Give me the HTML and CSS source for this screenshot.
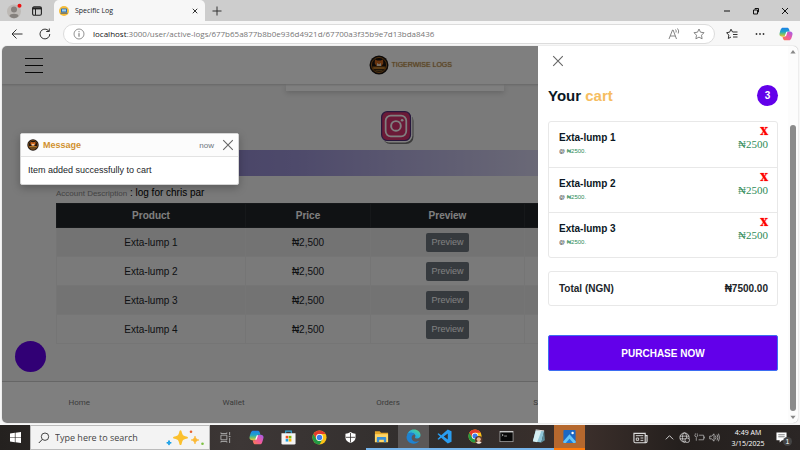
FILE: index.html
```html
<!DOCTYPE html>
<html lang="en">
<head>
<meta charset="utf-8">
<meta name="viewport" content="width=device-width, initial-scale=1">
<title>Specific Log</title>
<link rel="stylesheet" href="styles.css">
</head>
<body>
<svg class="defs" aria-hidden="true">
  <defs>
    <linearGradient id="copA" x1="0" y1="0" x2="0" y2="1"><stop offset="0" stop-color="#1c7fe8"/><stop offset=".45" stop-color="#1fa5c8"/><stop offset=".7" stop-color="#6cc070"/><stop offset="1" stop-color="#f0c63a"/></linearGradient>
    <linearGradient id="copB" x1="1" y1="0" x2="0" y2="1"><stop offset="0" stop-color="#9b5df0"/><stop offset=".5" stop-color="#ef5aa0"/><stop offset="1" stop-color="#fb7d4a"/></linearGradient>
    <linearGradient id="edgeA" x1="0" y1="1" x2="1" y2="0"><stop offset="0" stop-color="#1377d0"/><stop offset=".5" stop-color="#27b3dc"/><stop offset="1" stop-color="#5fdc6c"/></linearGradient>
    <symbol id="copilot" viewBox="0 0 16 16">
      <path d="M11 5h1.500C14.800 5 15.800 6.500 15.400 8.500c-.4 2-.9 3.500-1.500 5-.5 1-1.200 1.700-2.400 1.700H7c-1.500 0-2-.7-2.500-2L4 11h1.500c1 0 1.600-.6 2-1.700L8.800 6C9.200 5.200 10 5 11 5z" fill="url(#copB)"/>
      <path d="M4.500.8H9c1.500 0 2.200.7 2.600 2L12.200 5H10.800C9.500 5 8.800 5.700 8.400 7l-1 2.700C7 10.700 6.500 11 5.500 11H3.500C1.200 11 .2 9.500.6 7.500c.4-2 .9-3.500 1.500-5C2.600 1.500 3.300.8 4.500.8z" fill="url(#copA)"/>
      <path d="M8.300 5.500h1.400L8 10.500H6.500z" fill="#fff"/>
    </symbol>
    <symbol id="chrome" viewBox="0 0 16 16">
      <circle cx="8" cy="8" r="7.500" fill="#fbc116"/>
      <path d="M1.500 4.250A7.500 7.500 0 0 1 14.500 4.250H8A3.750 3.750 0 0 0 4.750 9.900z" fill="#e33b2e"/>
      <path d="M1.500 4.250A7.500 7.500 0 0 0 8 15.500L11.250 9.900A3.750 3.750 0 0 1 4.750 9.900z" fill="#229a45"/>
      <circle cx="8" cy="8" r="3.700" fill="#fff"/><circle cx="8" cy="8" r="2.900" fill="#3b7ded"/>
    </symbol>
    <symbol id="tiger" viewBox="0 0 20 20">
      <circle cx="10" cy="10" r="9.500" fill="#1b1410"/>
      <circle cx="10" cy="10" r="7.600" fill="none" stroke="#a8671f" stroke-width=".9"/>
      <path d="M6 4.500l2.300 1h3.400l2.300-1 .3 4-1.800 2.500h-5L5.700 8.500z" fill="#d0681c"/>
      <path d="M8 8l2 1.200L12 8v3H8z" fill="#f2e3cf"/>
      <path d="M3.500 11.500h13v2.800h-13z" fill="#a5641a"/>
      <path d="M5 13h10M6.500 15.800h7" stroke="#e0a045" stroke-width=".7"/>
    </symbol>
    <symbol id="cross" viewBox="0 0 12 12"><path d="M1.200 1.200l9.600 9.600M10.800 1.200l-9.600 9.600" fill="none" stroke="currentColor" stroke-width="1.100"/></symbol>
  </defs>
</svg>

<header class="tabstrip">
  <span class="avatar"><svg viewBox="0 0 16 16"><circle cx="7" cy="8.500" r="7" fill="#bdb9b5"/><circle cx="7" cy="6.500" r="3" fill="#85817d"/><path d="M2.500 13c0-3 9-3 9 0-2.500 3-6.500 3-9 0z" fill="#85817d"/><circle cx="12.500" cy="2.800" r="2" fill="#ee1010"/></svg></span>
  <button class="icon-btn workspaces" aria-label="Tab actions"><svg viewBox="0 0 10 10"><rect x=".6" y=".9" width="8.800" height="8.400" rx="1.500" fill="none" stroke="#222" stroke-width="1.100"/><path d="M.6 2.400h8.800" stroke="#222" stroke-width="2"/><path d="M3.500 3v6" stroke="#222"/></svg></button>
  <div class="tab">
    <svg class="favicon" viewBox="0 0 10 10"><circle cx="5" cy="5" r="5" fill="#f6bd3b"/><rect x="2" y="2.500" width="6" height="4" rx=".6" fill="#2d6fb5"/><rect x="3" y="3.300" width="4" height="2.200" fill="#9fd0f0"/><path d="M1.500 7.200h7" stroke="#4d6078"/></svg>
    <span class="tab-title">Specific Log</span>
    <button class="icon-btn tab-close" aria-label="Close tab"><svg viewBox="0 0 12 12"><path d="M1.500 1.500l9 9M10.500 1.500l-9 9" stroke="#333" stroke-width="2"/></svg></button>
  </div>
  <button class="icon-btn new-tab" aria-label="New tab"><svg viewBox="0 0 10 10"><path d="M5 .5v9M.5 5h9" stroke="#333"/></svg></button>
  <div class="window-controls">
    <button class="icon-btn" aria-label="Minimize"><svg viewBox="0 0 8 8"><path d="M1 4h6" stroke="#111"/></svg></button>
    <button class="icon-btn" aria-label="Restore"><svg viewBox="0 0 8 8"><path d="M1.500 3h4v4h-4zM3 2.500v-1h3.500V5H6" fill="none" stroke="#111"/></svg></button>
    <button class="icon-btn" aria-label="Close"><svg viewBox="0 0 8 8"><path d="M1 1l6 6M7 1L1 7" stroke="#111"/></svg></button>
  </div>
</header>

<div class="toolbar">
  <button class="icon-btn" aria-label="Back"><svg viewBox="0 0 12 12"><path d="M11.500 6H1M5.500 1.500L1 6l4.500 4.500" fill="none" stroke="#333"/></svg></button>
  <button class="icon-btn" aria-label="Refresh"><svg viewBox="0 0 12 12"><path d="M10.800 6A4.900 4.900 0 1 1 9 2.200l1 1M10.300.5v3H7.200" fill="none" stroke="#333"/></svg></button>
  <div class="address">
    <svg viewBox="0 0 12 12"><circle cx="6" cy="6" r="5" fill="none" stroke="#777" stroke-width=".8"/><path d="M6 5.200v3.500M6 3.200v1" stroke="#666"/></svg>
    <span class="url"><b>localhost</b>:3000/user/active-logs/677b65a877b8b0e936d4921d/67700a3f35b9e7d13bda8436</span>
    <button class="icon-btn" aria-label="Read aloud"><svg viewBox="0 0 12 12"><path d="M1 11l3.500-9h.6L8.500 11M2.200 8h5M7.500 1.500q1.200 1.300.5 3M9.500.5q2 2.200.7 5" fill="none" stroke="#777" stroke-width=".9"/></svg></button>
    <button class="icon-btn" aria-label="Favorite"><svg viewBox="0 0 12 12"><path d="M6 1l1.500 3.200 3.500.5-2.500 2.500.6 3.600L6 9.100l-3.100 1.700.6-3.600L1 4.700l3.500-.5z" fill="none" stroke="#777" stroke-width=".9"/></svg></button>
  </div>
  <button class="icon-btn" aria-label="Favorites list"><svg viewBox="0 0 12 12"><path d="M6.500 4L5 1.200 3.600 4.200l-3 .5 2.200 2.400L2.300 10.500 5 9M6.500 4h5M7 6.500h4.500M7 9h4.500" fill="none" stroke="#333"/></svg></button>
  <button class="icon-btn" aria-label="More"><svg viewBox="0 0 12 12"><g fill="#333"><circle cx="2.500" cy="6" r=".9"/><circle cx="6" cy="6" r=".9"/><circle cx="9.500" cy="6" r=".9"/></g></svg></button>
  <button class="icon-btn copilot" aria-label="Copilot"><svg><use href="#copilot"/></svg></button>
</div>

<div class="viewport">
  <div class="page">
    <div class="site-header">
      <button class="menu" aria-label="Menu"><i></i><i></i><i></i></button>
      <a class="brand" href="#"><svg><use href="#tiger"/></svg><span>TIGERWISE LOGS</span></a>
    </div>
    <main class="content">
      <div class="card-edge"></div>
      <svg class="insta" viewBox="0 0 32 32"><rect x="2" y="2.500" width="29.500" height="29.500" rx="7" fill="#777"/><rect x=".5" y=".5" width="30" height="30" rx="7" fill="#fff"/><rect x=".6" y=".6" width="28" height="28" rx="5.500" fill="#d6336f" stroke="#51307a" stroke-width="1.200"/><rect x="4.500" y="4.500" width="20" height="20" rx="5" fill="none" stroke="#fff" stroke-width="1.700"/><circle cx="14.500" cy="14.500" r="4.700" fill="none" stroke="#fff" stroke-width="1.900"/><circle cx="20.500" cy="9" r="1.300" fill="#fff"/></svg>
      <div class="band"></div>
      <p class="description"><small>Account Description</small> : log for chris par</p>
      <table>
        <colgroup><col class="c-product"><col class="c-price"><col class="c-preview"><col></colgroup>
        <thead><tr><th>Product</th><th>Price</th><th>Preview</th><td></td></tr></thead>
        <tbody>
          <tr><td>Exta-lump 1</td><td>₦2,500</td><td><button class="preview">Preview</button></td><td></td></tr>
          <tr><td>Exta-lump 2</td><td>₦2,500</td><td><button class="preview">Preview</button></td><td></td></tr>
          <tr><td>Exta-lump 3</td><td>₦2,500</td><td><button class="preview">Preview</button></td><td></td></tr>
          <tr><td>Exta-lump 4</td><td>₦2,500</td><td><button class="preview">Preview</button></td><td></td></tr>
        </tbody>
      </table>
    </main>
    <nav class="bottom-nav"><a href="#">Home</a><a href="#">Wallet</a><a href="#">Orders</a><a href="#">Shop</a></nav>
    <button class="fab" aria-label="Open cart"></button>
    <div class="backdrop"></div>

    <section class="toast" role="status">
      <div class="toast-head"><svg><use href="#tiger"/></svg><strong>Message</strong><small>now</small><button class="close" aria-label="Dismiss"><svg><use href="#cross"/></svg></button></div>
      <p>Item added successfully to cart</p>
    </section>

    <aside class="drawer">
      <button class="close" aria-label="Close cart"><svg><use href="#cross"/></svg></button>
      <div class="cart-title"><h2>Your <span>cart</span></h2><span class="count">3</span></div>
      <ul class="items">
        <li><div><h3>Exta-lump 1</h3><small>@ <em>₦2500.</em></small></div><div class="side"><button class="remove" aria-label="Remove Exta-lump 1">X</button><span>₦2500</span></div></li>
        <li><div><h3>Exta-lump 2</h3><small>@ <em>₦2500.</em></small></div><div class="side"><button class="remove" aria-label="Remove Exta-lump 2">X</button><span>₦2500</span></div></li>
        <li><div><h3>Exta-lump 3</h3><small>@ <em>₦2500.</em></small></div><div class="side"><button class="remove" aria-label="Remove Exta-lump 3">X</button><span>₦2500</span></div></li>
      </ul>
      <div class="total"><span>Total (NGN)</span><span>₦7500.00</span></div>
      <button class="purchase">PURCHASE NOW</button>
    </aside>
  </div>
  <div class="scrollbar"><svg viewBox="0 0 8 6"><path d="M.5 5.500h7L4 1z" fill="#888"/></svg><span class="thumb"></span><svg viewBox="0 0 8 6"><path d="M.5.500h7L4 5z" fill="#888"/></svg></div>
</div>

<footer class="taskbar">
  <button class="start" aria-label="Start"><svg viewBox="0 0 12 12"><path d="M0 1.700l5.300-.8v4.800H0zM6 .8l6-.8v5.700H6zM0 6.400h5.300v4.800L0 10.400zM6 6.400h6V12l-6-.8z" fill="#fff"/></svg></button>
  <label class="search">
    <svg class="lens" viewBox="0 0 12 12"><circle cx="7" cy="4.700" r="3.700" fill="none" stroke="#333" stroke-width=".9"/><path d="M4.300 7.400L.8 11" stroke="#333"/></svg>
    <input type="text" aria-label="Search" placeholder="Type here to search">
    <svg class="sparkle" viewBox="0 0 38 16"><path d="M14.500.3c.9 0 1.100 1.200 1.500 2.700.6 2 1.300 2.800 3.300 3.300 1.600.4 2.700.6 2.700 1.400s-1.100 1-2.700 1.400c-2 .5-2.700 1.300-3.300 3.300-.4 1.500-.6 2.700-1.500 2.700s-1.100-1.200-1.500-2.700c-.6-2-1.300-2.800-3.300-3.300-1.600-.4-2.700-.6-2.700-1.400s1.100-1 2.700-1.400c2-.5 2.700-1.300 3.300-3.300.4-1.500.6-2.700 1.500-2.700z" fill="#fbc02d"/><path d="M29 6c.8 2.600 1.200 3.200 4 4-2.800.8-3.200 1.400-4 4-.8-2.600-1.200-3.200-4-4 2.800-.8 3.200-1.400 4-4z" fill="#fbb834" stroke="#fbb834" stroke-width=".6"/><path d="M3 10.500l.6 1.700 1.700.6-1.700.6L3 15.100l-.6-1.700-1.700-.6 1.700-.6z" fill="#18a0e8" stroke="#18a0e8"/><circle cx="25" cy="1.800" r="1.300" fill="#e8622e"/><circle cx="36.500" cy="13.800" r="1.300" fill="#7cc142"/></svg>
  </label>
  <div class="apps">
    <button aria-label="Task view"><svg class="sm" viewBox="0 0 12 12"><path d="M1 3.500h6.500v5H1zM1 .5v1.200h6.500V.5M1 11.500v-1.200h6.500v1.200M10.500 0v3.500M10.500 6.500V12M9.500 5h2" fill="none" stroke="#bbb" stroke-width=".9"/></svg></button>
    <button aria-label="Copilot"><svg><use href="#copilot"/></svg></button>
    <button aria-label="Store"><svg viewBox="0 0 16 16"><path d="M5 4V1.200h6V4" fill="none" stroke="#36a8d8" stroke-width="1.200"/><path d="M.5 3.500h15V14q0 1.500-1.500 1.500H2Q.5 15.500.5 14z" fill="#f4f4f4"/><path d="M5 6.200h2.800V9H5z" fill="#f04e23"/><path d="M8.300 6.200h2.800V9H8.300z" fill="#7eb900"/><path d="M5 9.500h2.800v2.800H5z" fill="#1aa3e8"/><path d="M8.300 9.500h2.800v2.800H8.300z" fill="#fdb900"/></svg></button>
    <button aria-label="Chrome"><svg><use href="#chrome"/></svg></button>
    <button aria-label="Security"><svg class="sm" viewBox="0 0 12 12"><path d="M6 0q2.500 1.800 5.500 1.800V6q0 4-5.500 6Q.5 10 .5 6V1.800Q3.500 1.800 6 0z" fill="#fff"/><path d="M6 1v10.500M1 5.800h10" stroke="#332f2e" stroke-width=".9"/></svg></button>
    <button class="open" aria-label="Explorer"><svg viewBox="0 0 16 16"><path d="M1 2.500h5L7.500 4H15v10H1z" fill="#e7a829"/><path d="M1 5.500h14V14H1z" fill="#ffd667"/><path d="M3 14V9.500q0-1 1-1h8q1 0 1 1V14h-2.500v-2.500h-5V14z" fill="#3a91d8"/></svg></button>
    <button class="open active" aria-label="Edge"><svg viewBox="0 0 16 16"><path d="M1 7.500C1.500 3 4.500.5 8.500.5c4 0 7 2.800 7 6 0 2.300-1.600 3.600-3.600 3.600-1.500 0-2.400-.4-2.400-1.100 0-.5.600-.8.600-1.700C10 5.500 8 4 5.500 4 3.500 4 1.800 5.300 1 7.500z" fill="url(#edgeA)"/><path d="M.6 8C1 5.500 3 4 5.500 4 7.500 4 9 5 9.700 6 7.500 5.600 6 7.500 6 9.500c0 2.800 2.700 4.300 5.200 4 1-.1 2-.5 2.800-1-1.200 2-3.500 3.200-6 3.200C3.500 15.700.3 12 .6 8z" fill="#1e82d2"/></svg></button>
    <button class="open" aria-label="VS Code"><svg viewBox="0 0 16 16"><path d="M11.500.5L15.500 2.400v11.200l-4 1.900L4.500 9.300l-2.800 2.100L.5 10.600 3.300 8 .5 5.400l1.200-.8 2.800 2.100zM11.500 4.800L7.200 8l4.300 3.200z" fill="#2a9df0" fill-rule="evenodd"/></svg></button>
    <button class="open" aria-label="Chrome profile"><svg viewBox="0 0 16 16"><use href="#chrome" width="15" height="15"/><circle cx="11.500" cy="11.500" r="4" fill="#5a3a2c"/><circle cx="11.500" cy="11" r="2.200" fill="#e8b48c"/><path d="M8.500 14.500q3-3 6 0-3 2.500-6 0z" fill="#f4e6d8"/></svg></button>
    <button class="open" aria-label="Terminal"><svg viewBox="0 0 16 16"><rect x="1" y="2.500" width="14" height="11" fill="#080808" stroke="#aaa" stroke-width=".8"/><path d="M1 3h14" stroke="#ddd" stroke-width="1.200"/><path d="M3 5.500l1.500 1L3 7.500M5.500 7.500h3" fill="none" stroke="#ddd" stroke-width=".7"/></svg></button>
    <button class="open" aria-label="Notepad"><svg viewBox="0 0 16 16"><path d="M5 1.500l9 1-3 12-9-1.500z" fill="#8fc6d8"/><path d="M5 1.500l6 .8L6.500 14 2 13z" fill="#d5eef2"/><path d="M14 2.500l.8 9.500-3.800 2.500z" fill="#5b8d9c"/><path d="M5 1l9 1" stroke="#eee"/></svg></button>
    <button class="open photos" aria-label="Photos"><svg viewBox="0 0 16 16"><rect x="1.500" y="1" width="13" height="14" rx="1" fill="#1b68c4"/><path d="M1.500 13L8 5.500l6.500 7.500v2h-13z" fill="#65c4f7"/><path d="M4 15l4-4.500 4 4.500z" fill="#1d7ad8"/><circle cx="11.300" cy="4.200" r="1.300" fill="#fff"/></svg></button>
  </div>
  <div class="tray">
    <svg class="news" viewBox="0 0 16 12"><path d="M1 1h12v10H2.500Q1 11 1 9.500zM13 3.500h2v6q0 1.500-1.500 1.500" fill="none" stroke="#ddd" stroke-width="1.200"/><path d="M3 3.500h8M8 6h3M8 8.500h3" stroke="#ddd"/><path d="M3.500 6h2.500v2.500H3.500z" fill="none" stroke="#ddd"/></svg>
    <svg viewBox="0 0 12 12"><path d="M2 8l4-4 4 4" fill="none" stroke="#ddd"/></svg>
    <svg viewBox="0 0 12 12"><circle cx="6" cy="6" r="5" fill="none" stroke="#ddd" stroke-width=".9"/><ellipse cx="6" cy="6" rx="2.200" ry="5" fill="none" stroke="#ddd" stroke-width=".8"/><path d="M1 4.500h10M1 7.500h10" stroke="#ddd" stroke-width=".8"/><circle cx="9" cy="9" r="2.500" fill="#2b2625" stroke="#ddd" stroke-width=".8"/></svg>
    <svg viewBox="0 0 12 12"><path d="M5.500 3.500h5v5H5M11.500 5v2M1 3v1.500q1.500 2 3 0V3M2.500 6v3.500M1.500 1.500V3M3.500 1.500V3" fill="none" stroke="#bbb" stroke-width=".8"/></svg>
    <svg viewBox="0 0 12 12"><path d="M.8 4.500h2L5.500 2v8L2.800 7.500h-2zM7 4q1.200 2 0 4M8.700 2.800q2 3.200 0 6.400M10.300 1.800q2.400 4.200 0 8.400" fill="none" stroke="#ccc" stroke-width=".8"/></svg>
    <div class="clock"><span>4:49 AM</span><span>3/15/2025</span></div>
    <div class="notice"><svg viewBox="0 0 12 12"><path d="M.5.500h11v8.500H6.500L4 11.500V9H.5z" fill="#fff"/><path d="M2.500 3h7M2.500 5.200h7" stroke="#555" stroke-width=".8"/></svg><span>1</span></div>
  </div>
</footer>
</body>
</html>
```
FILE: styles.css
```css
* { box-sizing: border-box; }
body {
  margin: 0;
  min-height: 100vh;
  display: flex;
  flex-direction: column;
  background: #f7f7f7;
  color: #212529;
  font: 10px/15px "Liberation Sans", Arial, sans-serif;
}
button { border: 0; padding: 0; background: none; font: inherit; color: inherit; }
a { color: inherit; text-decoration: none; }
h2, h3, p, ul { margin: 0; padding: 0; }
svg { display: block; width: 12px; height: 12px; flex: none; }
.defs { position: absolute; width: 0; height: 0; }
.icon-btn { display: flex; flex: none; }

/* Browser chrome */
.tabstrip {
  display: flex;
  align-items: center;
  height: 21px;
  padding-left: 7px;
  background: #cdcdcd;
}
.avatar svg { width: 16px; height: 16px; }
.workspaces { margin: 0 12px 0 9px; }
.workspaces svg, .favicon, .new-tab svg { width: 10px; height: 10px; }
.tab {
  display: flex;
  align-items: center;
  gap: 10px;
  width: 151px;
  height: 21px;
  padding: 0 7px 0 5px;
  border-radius: 5px 5px 0 0;
  background: #f7f7f7;
  font: 7px/10px "Open Sans", sans-serif;
}
.tab-title { flex: 1; margin-left: -4px; }
.tab-close svg { width: 6px; height: 6px; }
.new-tab { margin-left: 7px; }
.window-controls { display: flex; gap: 21px; margin-left: auto; padding-right: 11px; }
.window-controls svg { width: 8px; height: 8px; }
.toolbar {
  display: flex;
  align-items: center;
  gap: 16px;
  height: 25px;
  padding: 0 7px 0 11px;
}
.address {
  flex: 1;
  display: flex;
  align-items: center;
  gap: 13px;
  height: 20px;
  margin: 0 -5px 0 -4px;
  padding: 0 9px;
  border: 1px solid #dcdcdc;
  border-radius: 10px;
  background: #fff;
}
.url { flex: 1; margin-left: -5px; color: #767676; font: 8px/12px "Open Sans", sans-serif; white-space: nowrap; }
.url b { font-weight: 400; color: #111; }
.copilot { margin-left: -3px; }
.copilot svg { width: 14px; height: 14px; }

/* Web page */
.viewport {
  flex: 1;
  display: flex;
  margin: 0 2px 2px;
  overflow: hidden;
  border-radius: 5px;
  box-shadow: 0 0 1px #999;
  background: #fcfcfc;
}
.page { position: relative; flex: 1; display: flex; flex-direction: column; background: #f4f4f4; overflow: hidden; }
.site-header {
  display: flex;
  align-items: center;
  justify-content: space-between;
  height: 38px;
  padding: 0 336px 0 23px;
  background: #fff;
  box-shadow: 0 1px 2px #ccc;
  z-index: 1;
}
.menu { display: flex; flex-direction: column; gap: 6px; width: 18px; }
.menu i { height: 1px; background: #111; }
.brand { display: flex; align-items: center; gap: 2px; color: #b78a48; font-size: 7px; line-height: 10px; text-shadow: 0 0 1px #b78a48; }
.brand svg { width: 20px; height: 20px; }
.content { flex: 1; padding: 0 54px; display: flex; flex-direction: column; }
.card-edge { align-self: center; width: 218px; height: 7px; background: #fff; box-shadow: 0 2px 5px #ccc; }
.insta { align-self: center; width: 33px; height: 33px; margin: 20px 0 6px 4px; }
.band { height: 26px; background: linear-gradient(90deg, #8276c4, #9c94d6 35%, #d6d4ee 72%, #eee); }
.description { padding: 9px 0 2px; color: #000; }
.description small { color: #8b8b8b; font-size: 8px; }
table { width: 100%; table-layout: fixed; border-collapse: collapse; text-align: center; }
.c-product { width: 189px; }
.c-price { width: 125px; }
.c-preview { width: 154px; }
td, th { padding: 5px 0 4px; border: 1px solid #eaeaea; }
thead th, thead td { padding: 4px 0; border-color: #2c3034; background: #212529; color: #fff; }
tbody tr:nth-child(odd) { background: #e6e6e6; }
.preview {
  display: block;
  width: 43px;
  height: 19px;
  margin: 0 auto;
  border-radius: 2px;
  background: #6c757d;
  color: #fff;
  font-size: 9px;
}
.bottom-nav {
  display: grid;
  grid-template-columns: repeat(5, 1fr);
  align-items: center;
  height: 42px;
  padding-right: 14px;
  border-top: 1px solid #ccc;
  background: #fff;
  color: #777;
  font: 8px/12px Roboto, sans-serif;
  text-align: center;
}
.fab { position: absolute; left: 13px; bottom: 51px; width: 31px; height: 31px; border-radius: 50%; background: #6200ea; }
.backdrop { position: absolute; inset: 0; z-index: 2; background: rgba(0, 0, 0, 0.5); }

.toast {
  position: absolute;
  z-index: 3;
  top: 87px;
  left: 18px;
  width: 219px;
  border: 1px solid #d5d5d5;
  border-radius: 2px;
  background: #fff;
  box-shadow: 0 3px 8px rgba(0, 0, 0, 0.25);
}
.toast-head { display: flex; align-items: center; gap: 4px; height: 23px; padding: 0 4px 0 6px; border-bottom: 1px solid #e3e3e3; background: #fcfcfc; }
.toast-head strong { flex: 1; color: #d1912f; font-size: 9px; }
.toast-head small { margin-right: 4px; color: #6c757d; font-size: 8px; }
.toast p { padding: 6px 7px; font-size: 9px; }
.close { color: #666; }

.drawer {
  position: absolute;
  inset: 0 0 0 auto;
  z-index: 4;
  width: 250px;
  padding: 9px 10px;
  background: #fff;
}
.drawer .close { display: block; margin-left: 4px; }
.cart-title { display: flex; align-items: center; justify-content: space-between; margin: 18px 0 15px; height: 21px; }
h2 { font-size: 15px; line-height: 21px; color: #0b1724; }
h2 span { color: #f6bd60; }
.count { width: 21px; height: 21px; border-radius: 50%; background: #6200ea; color: #fff; font-weight: 700; line-height: 21px; text-align: center; }
.items, .total { border: 1px solid #e8e8e8; border-radius: 3px; }
.items { list-style: none; }
.items li { display: flex; justify-content: space-between; height: 45px; padding: 4px 9px 4px 10px; }
.items li + li { border-top: 1px solid #e8e8e8; }
.items h3 { margin-top: 4px; font-size: 10px; line-height: 15px; color: #0b1724; }
.items small { display: block; font-size: 6px; line-height: 12px; }
.items em, .side { color: #2e8b57; font-style: normal; }
.side { display: flex; flex-direction: column; align-items: flex-end; font: 11px/12px "Liberation Serif", serif; }
.remove { color: #f00; font: bold 11px/12px "DejaVu Serif Condensed", "DejaVu Serif", serif; text-shadow: 0 0 1px #f00; }
.total { display: flex; justify-content: space-between; margin: 13px 0 29px; padding: 9px 9px 9px 10px; font-weight: 700; line-height: 15px; }
.purchase { display: block; width: 100%; height: 36px; border: 1px solid #3d6df2; border-radius: 2px; background: #6200ea; color: #fff; font-weight: 700; }

.scrollbar { display: flex; flex-direction: column; align-items: center; width: 10px; padding: 3px 0; }
.scrollbar svg { width: 6px; height: 5px; }
.thumb { flex: 1; width: 6px; margin: 71px 0 4px; border-radius: 3px; background: #8b8b8b; }

/* Desktop taskbar */
.taskbar { display: flex; height: 25px; background: linear-gradient(90deg, #24211f, #3d3736 30%, #302d2c 55%, #3b2f2b 73%, #241f1d 85%, #2b2625); color: #fff; }
.taskbar button { display: flex; align-items: center; justify-content: center; }
.start { width: 30px; }
.start svg { width: 11px; height: 11px; }
.search { display: flex; align-items: center; width: 180px; padding: 0 5px 0 7px; border: 1px solid #bbb; background: #f3f3f3; }
.search input { flex: 1; min-width: 0; padding: 0 0 0 5px; border: 0; background: none; color: #444; font: 9px/14px "Open Sans", sans-serif; }
.search input::placeholder { color: #444; opacity: 1; }
.search .sparkle { width: 38px; height: 16px; }
.apps { display: grid; grid-template-columns: repeat(12, 1fr); width: 375px; }
.apps svg { width: 15px; height: 15px; }
.apps .sm { width: 11px; height: 11px; }
.taskbar .open { border-bottom: 2px solid #76b5ec; }
.taskbar .active { background: #5b5858; }
.taskbar .photos { background: #b5682e; border-bottom-color: #ff7b0a; }
.tray { display: flex; align-items: center; gap: 4px; margin-left: auto; padding-right: 8px; }
.tray svg { width: 11px; height: 11px; }
.tray .news { width: 15px; height: 12px; margin-right: 12px; }
.clock { width: 48px; display: flex; flex-direction: column; text-align: center; font: 7px/11px "Open Sans", sans-serif; }
.notice { position: relative; padding-right: 5px; }
.notice span { position: absolute; right: 0; top: 5px; width: 9px; height: 9px; border-radius: 50%; background: #444; font-size: 7px; line-height: 9px; text-align: center; }
```
